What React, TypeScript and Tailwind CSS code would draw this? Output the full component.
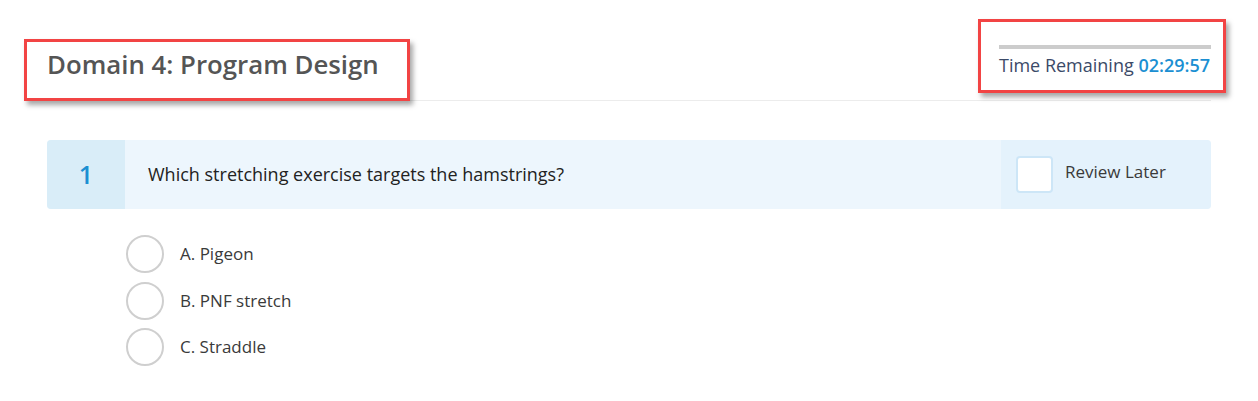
import React from "react";

const options = ["A. Pigeon", "B. PNF stretch", "C. Straddle"];

export default function App() {
  return (
    <div className="relative min-h-[401px] bg-white text-[#333]" style={{ fontFamily: '"Open Sans", sans-serif' }}>
      {/* Header */}
      <header className="mx-[47px] flex h-[101px] items-end justify-between border-b border-[#ececec] pb-[20px]">
        <h1 className="text-[25.8px] font-semibold leading-[32px] text-[#555]">Domain 4: Program Design</h1>
        <div className="flex w-[212px] flex-col pb-[4px]">
          <div className="mb-[5px] h-[4px] w-full bg-[#cccccc]" />
          <div className="whitespace-nowrap text-[18px] leading-[22px] text-[#3b4a68]">
            Time Remaining <span className="font-semibold text-[#1b8fd2]">02:29:57</span>
          </div>
        </div>
      </header>

      {/* Question */}
      <main className="mx-[47px] mt-[39px]">
        <div className="flex h-[69px] overflow-hidden rounded-[4px] bg-[#edf6fd]">
          <div className="flex w-[78px] items-center justify-center bg-[#d9edf8] text-[25px] font-semibold text-[#1b8fd2]">1</div>
          <div className="flex flex-1 items-center pl-[23px] text-[18px] text-[#222]">
            Which stretching exercise targets the hamstrings?
          </div>
          <label className="flex w-[210px] items-center gap-[12px] bg-[#e4f2fc] pl-[15px]">
            <span className="h-[37px] w-[37px] rounded-[4px] border-2 border-[#cde6f7] bg-white" />
            <span className="-mt-[6px] text-[17px] text-[#3a3a3a]">Review Later</span>
          </label>
        </div>

        <ul className="mt-[26px] flex flex-col gap-[8.5px] pl-[79px]">
          {options.map((o) => (
            <li key={o} className="flex items-center gap-[16px]">
              <span className="h-[38px] w-[38px] rounded-full border-2 border-[#cfcfcf] bg-white" />
              <span className="text-[17px] text-[#3a3a3a]">{o}</span>
            </li>
          ))}
        </ul>
      </main>

      {/* Annotation boxes */}
      <div className="pointer-events-none absolute left-[24px] top-[39px] h-[62px] w-[386px] border-[3px] border-[#f24444] shadow-[3px_4px_5px_rgba(0,0,0,0.35)]" />
      <div className="pointer-events-none absolute left-[978px] top-[19px] h-[74px] w-[248px] border-[3px] border-[#f24444] shadow-[3px_4px_5px_rgba(0,0,0,0.35)]" />
    </div>
  );
}
